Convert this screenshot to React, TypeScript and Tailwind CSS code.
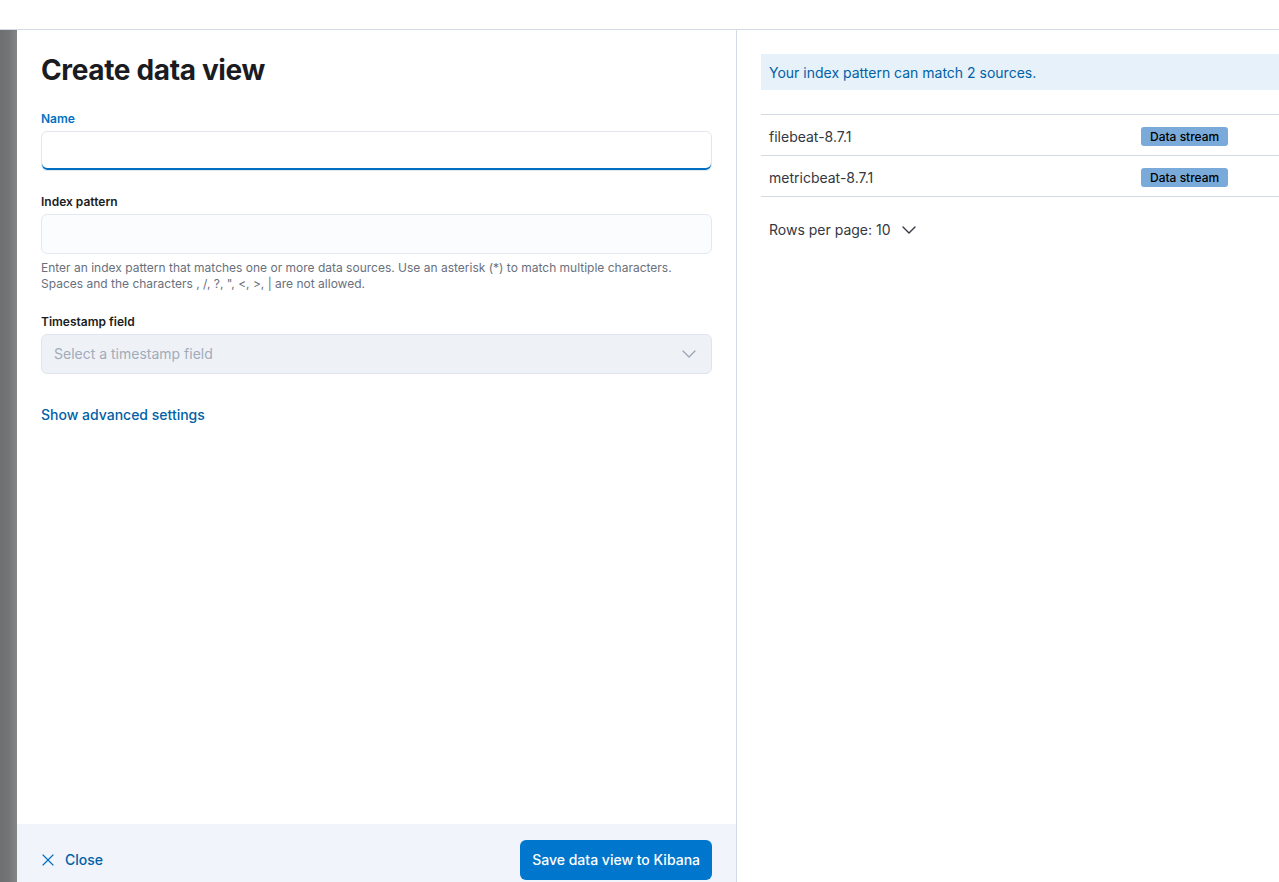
import React from 'react';
import { X, ChevronDown } from 'lucide-react';

const sources = [
  { name: 'filebeat-8.7.1', type: 'Data stream' },
  { name: 'metricbeat-8.7.1', type: 'Data stream' },
];

export default function App() {
  return (
    <div className="h-[882px] w-[1279px] overflow-hidden bg-white flex flex-col" style={{ fontFamily: 'Inter, "Noto Sans", sans-serif' }}>
      <div className="h-[30px] shrink-0 border-b border-[#d3dae6] bg-white" />
      <div className="flex flex-1 min-h-0">
        <div className="w-[17px] shrink-0 bg-gradient-to-r from-[#6e6f71] via-[#737475] to-[#858687]" />
        <div className="flex flex-1 min-w-0">
          {/* left column: form */}
          <div className="w-[720px] shrink-0 flex flex-col border-r border-[#d3dae6]">
            <div className="flex-1 px-6 pt-[22px]">
              <h1 className="text-[28px] leading-9 font-bold text-[#1a1c21] tracking-[-0.35px]">Create data view</h1>

              <div className="mt-[21px]">
                <label className="block text-xs font-semibold text-[#0071c2] leading-[20px]">Name</label>
                <div className="mt-[2px] h-10 rounded-md border border-[#e3e6ef] bg-white shadow-[inset_0_-2px_0_0_#0071c2]" />
              </div>

              <div className="mt-[21px]">
                <label className="block text-xs font-semibold text-[#1a1c21] leading-[20px]">Index pattern</label>
                <div className="mt-[2px] h-10 rounded-md border border-[#e3e8f2] bg-[#fbfcfd]" />
                <p className="mt-[6px] text-xs leading-4 text-[#69707d]">
                  Enter an index pattern that matches one or more data sources. Use an asterisk (*) to match multiple characters.
                  <br />
                  Spaces and the characters , /, ?, ", &lt;, &gt;, | are not allowed.
                </p>
              </div>

              <div className="mt-[20px]">
                <label className="block text-xs font-semibold text-[#1a1c21] leading-[20px]">Timestamp field</label>
                <div className="mt-[2px] h-10 rounded-md border border-[#dfe5ef] bg-[#eef2f7] flex items-center justify-between pl-3 pr-[10px]">
                  <span className="text-sm text-[#a2abba]">Select a timestamp field</span>
                  <ChevronDown className="w-6 h-6 text-[#98a2b3]" strokeWidth={1.2} />
                </div>
              </div>

              <div className="mt-[28px]">
                <span className="text-sm font-medium text-[#0061a6]">Show advanced settings</span>
              </div>
            </div>

            <div className="h-[58px] shrink-0 bg-[#f1f4fa] flex items-end justify-between px-6 pb-[2px]">
              <div className="flex items-center gap-[10px] h-10 text-sm font-medium text-[#0061a6]">
                <X className="w-5 h-5 -ml-[3px] text-[#0071c2]" strokeWidth={1.4} />
                <span className="-ml-[3px]">Close</span>
              </div>
              <button className="h-10 rounded-md bg-[#0077cc] px-3 text-sm font-medium text-white">Save data view to Kibana</button>
            </div>
          </div>

          {/* right column: matching sources */}
          <div className="flex-1 min-w-0 pl-6 pt-6">
            <div className="h-9 bg-[#e6f1fa] px-2 flex items-center pt-[2px] text-sm text-[#0061a6]">
              Your index pattern can match 2 sources.
            </div>
            <div className="mt-6 border-t border-[#d3dae6]">
              {sources.map((s) => (
                <div key={s.name} className="h-[41px] border-b border-[#d3dae6] flex items-center pt-[3px]">
                  <span className="w-[380px] pl-2 text-sm text-[#343741]">{s.name}</span>
                  <span className="rounded-[3px] bg-[#79aad9] px-[9px] h-[19px] flex items-center text-xs font-medium text-[#000]">{s.type}</span>
                </div>
              ))}
            </div>
            <div className="mt-[21px] pl-2 flex items-center gap-[6px] text-sm text-[#343741]">
              <span>Rows per page: 10</span>
              <ChevronDown className="w-6 h-6" strokeWidth={1.4} />
            </div>
          </div>
        </div>
      </div>
    </div>
  );
}
